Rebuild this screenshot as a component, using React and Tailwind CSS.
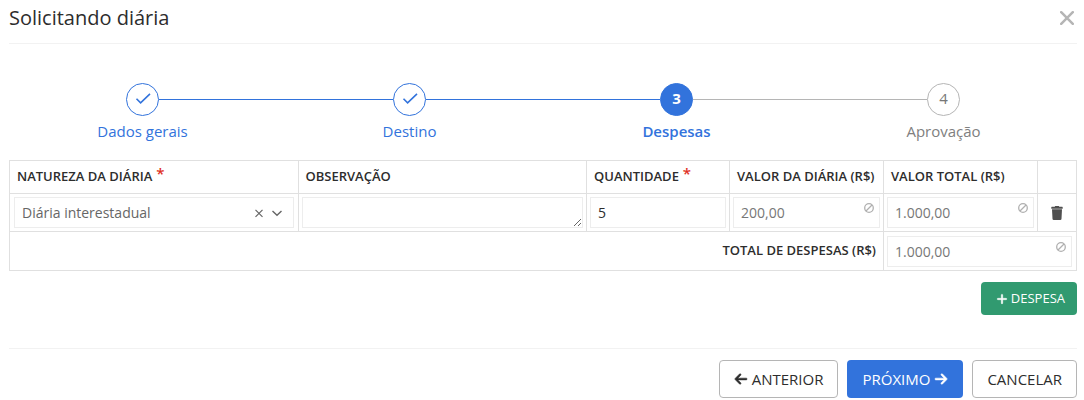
import { useState } from "react";
import { FaArrowLeft, FaArrowRight, FaPlus } from "react-icons/fa6";

const steps = [
  { label: "Dados gerais", status: "done" },
  { label: "Destino", status: "done" },
  { label: "Despesas", status: "current" },
  { label: "Aprovação", status: "pending" },
];

const labelStyles = {
  done: "text-[#3273dc]",
  current: "text-[#3273dc] font-semibold",
  pending: "text-[#808080]",
};

const circleStyles = {
  done: "border-[#3273dc] text-[#3273dc]",
  current: "border-[#3273dc] bg-[#3273dc] text-white font-bold",
  pending: "border-[#b5b5b5] text-[#777]",
};

function CheckIcon() {
  return (
    <svg
      className="w-4 h-4"
      viewBox="0 0 16 16"
      fill="none"
      stroke="currentColor"
      strokeWidth={1.6}
      aria-hidden="true"
    >
      <path d="M1.5 7.8L5.6 11.8L15 2.8" />
    </svg>
  );
}

function BlockedIcon() {
  return (
    <svg
      className="absolute top-1.5 right-1.5 w-2.5 h-2.5 text-[#b0b0b0]"
      viewBox="0 0 10 10"
      fill="none"
      stroke="currentColor"
      strokeWidth={1.3}
      aria-hidden="true"
    >
      <circle cx="5" cy="5" r="4.3" />
      <path d="M2 8L8 2" />
    </svg>
  );
}

function TrashIcon() {
  return (
    <svg
      className="w-3 h-3.5"
      viewBox="0 0 12 14"
      fill="currentColor"
      aria-hidden="true"
    >
      <path d="M4.2 0h3.6l.5.8H11.2a.5.5 0 0 1 .5.5v1.4H.3V1.3a.5.5 0 0 1 .5-.5h2.9zM1 3.2h10l-.5 9.5a1.3 1.3 0 0 1-1.3 1.3H2.8a1.3 1.3 0 0 1-1.3-1.3z" />
    </svg>
  );
}

function Steps() {
  return (
    <ol className="grid grid-cols-4 pt-[39px]">
      {steps.map((step, i) => (
        <li key={step.label} className="flex flex-col items-center">
          <div className="w-full flex items-center">
            <span
              className={`flex-1 h-px ${
                i === 0
                  ? "bg-transparent"
                  : step.status === "pending"
                    ? "bg-[#b5b5b5]"
                    : "bg-[#3273dc]"
              }`}
            />
            <span
              className={`w-[33px] h-[33px] pb-0.5 rounded-full border flex items-center justify-center text-[15px] ${circleStyles[step.status]}`}
            >
              {step.status === "done" ? <CheckIcon /> : i + 1}
            </span>
            <span
              className={`flex-1 h-px ${
                i === steps.length - 1
                  ? "bg-transparent"
                  : step.status === "done"
                    ? "bg-[#3273dc]"
                    : "bg-[#b5b5b5]"
              }`}
            />
          </div>
          <span
            className={`mt-[3px] text-[15px] leading-6 ${labelStyles[step.status]}`}
          >
            {step.label}
          </span>
        </li>
      ))}
    </ol>
  );
}

function Required() {
  return (
    <span className="align-[2px] text-[15px] leading-none text-[#e0301e]">
      {" "}
      *
    </span>
  );
}

function ReadOnlyField({ label, value }) {
  return (
    <div className="relative">
      <input
        type="text"
        aria-label={label}
        value={value}
        readOnly
        className="block w-full h-[31px] border border-[#ededed] pl-[7px] pr-6 text-sm text-[#777] outline-none"
      />
      <BlockedIcon />
    </div>
  );
}

export default function App() {
  const [nature, setNature] = useState("interestadual");
  const [note, setNote] = useState("");
  const [quantity, setQuantity] = useState("5");

  const th =
    "border border-[#e0e0e0] h-[33px] px-[7px] pt-0 pb-0.5 text-left text-[13px] leading-5 font-semibold whitespace-nowrap";
  const td = "border border-[#e0e0e0] p-[3px]";

  return (
    <main className="pl-[9px] pr-[7px] bg-white text-[#2d2d2d] font-['Open_Sans',sans-serif]">
      <header className="h-11 pb-2 flex items-center justify-between border-b border-[#f2f2f2]">
        <h1 className="text-xl">Solicitando diária</h1>
        <button
          type="button"
          aria-label="Fechar"
          className="px-[3px] text-[#b5b5b5]"
        >
          <svg
            className="w-3.5 h-3.5"
            viewBox="0 0 14 14"
            fill="none"
            stroke="currentColor"
            strokeWidth={2.5}
            strokeLinecap="round"
          >
            <path d="M1.2 1.2L12.8 12.8M12.8 1.2L1.2 12.8" />
          </svg>
        </button>
      </header>

      <Steps />

      <table className="mt-[17px] w-full table-fixed border-collapse">
        <colgroup>
          <col />
          <col />
          <col className="w-[143px]" />
          <col className="w-[154px]" />
          <col className="w-[154px]" />
          <col className="w-[39px]" />
        </colgroup>
        <thead>
          <tr>
            <th className={th}>
              NATUREZA DA DIÁRIA
              <Required />
            </th>
            <th className={th}>OBSERVAÇÃO</th>
            <th className={th}>
              QUANTIDADE
              <Required />
            </th>
            <th className={th}>VALOR DA DIÁRIA (R$)</th>
            <th className={th}>VALOR TOTAL (R$)</th>
            <th className={th} aria-label="Ações"></th>
          </tr>
        </thead>
        <tbody>
          <tr>
            <td className="border border-[#e0e0e0] px-1 py-[3px]">
              <div className="relative">
                <select
                  aria-label="Natureza da diária"
                  value={nature}
                  onChange={(e) => setNature(e.target.value)}
                  className="block w-full h-[31px] appearance-none border border-[#ededed] pl-[7px] pr-12 text-sm text-[#666] outline-none"
                >
                  <option value=""></option>
                  <option value="interestadual">Diária interestadual</option>
                </select>
                <div className="absolute inset-y-0 right-3 flex items-center gap-2 text-[#666] pointer-events-none">
                  <button
                    type="button"
                    aria-label="Limpar"
                    onClick={() => setNature("")}
                    className="pointer-events-auto"
                  >
                    <svg
                      className="w-2.5 h-2.5"
                      viewBox="0 0 10 10"
                      fill="none"
                      stroke="currentColor"
                      strokeWidth={1.2}
                    >
                      <path d="M1.5 1.8L8.5 8.8M8.5 1.8L1.5 8.8" />
                    </svg>
                  </button>
                  <svg
                    className="w-2.5 h-2.5"
                    viewBox="0 0 10 10"
                    fill="none"
                    stroke="currentColor"
                    strokeWidth={1.4}
                    aria-hidden="true"
                  >
                    <path d="M0.5 3L5 7.3L9.5 3" />
                  </svg>
                </div>
              </div>
            </td>
            <td className={td}>
              <textarea
                aria-label="Observação"
                value={note}
                onChange={(e) => setNote(e.target.value)}
                className="block w-full h-[31px] border border-[#ededed] px-[7px] py-1 text-sm resize outline-none"
              />
            </td>
            <td className={td}>
              <input
                type="text"
                aria-label="Quantidade"
                value={quantity}
                onChange={(e) => setQuantity(e.target.value)}
                className="block w-full h-[31px] border border-[#ededed] px-[7px] text-sm outline-none"
              />
            </td>
            <td className={td}>
              <ReadOnlyField label="Valor da diária" value="200,00" />
            </td>
            <td className={td}>
              <ReadOnlyField label="Valor total" value="1.000,00" />
            </td>
            <td className={td}>
              <button
                type="button"
                aria-label="Remover despesa"
                className="mx-auto flex text-[#4f4f4f]"
              >
                <TrashIcon />
              </button>
            </td>
          </tr>
          <tr className="h-[39px]">
            <th colSpan={4} scope="row" className={th}>
              <span className="block text-right">TOTAL DE DESPESAS (R$)</span>
            </th>
            <td colSpan={2} className="border border-[#e0e0e0] py-[3px] pl-[3px] pr-1">
              <ReadOnlyField label="Total de despesas" value="1.000,00" />
            </td>
          </tr>
        </tbody>
      </table>

      <div className="mt-[11px] flex justify-end">
        <button
          type="button"
          className="h-[33px] pl-[15px] pr-3 flex items-center gap-[3px] rounded bg-[#319a70] text-[13px] text-white"
        >
          <FaPlus className="w-3 h-3" stroke="currentColor" strokeWidth={16} />
          DESPESA
        </button>
      </div>

      <footer className="mt-[33px] pt-[11px] flex justify-end gap-[9px] border-t border-[#f2f2f2] text-[15px]">
        <button
          type="button"
          className="h-[38px] px-3.5 flex items-center gap-1 rounded border border-[#b5b5b5]"
        >
          <FaArrowLeft
            className="w-3.5 h-3.5"
            stroke="currentColor"
            strokeWidth={20}
          />
          ANTERIOR
        </button>
        <button
          type="button"
          className="h-[38px] px-[15px] flex items-center gap-1 rounded bg-[#3273dc] font-medium text-white"
        >
          PRÓXIMO
          <FaArrowRight
            className="w-3.5 h-3.5"
            stroke="currentColor"
            strokeWidth={20}
          />
        </button>
        <button
          type="button"
          className="h-[38px] px-3.5 flex items-center rounded border border-[#b5b5b5]"
        >
          CANCELAR
        </button>
      </footer>
    </main>
  );
}
